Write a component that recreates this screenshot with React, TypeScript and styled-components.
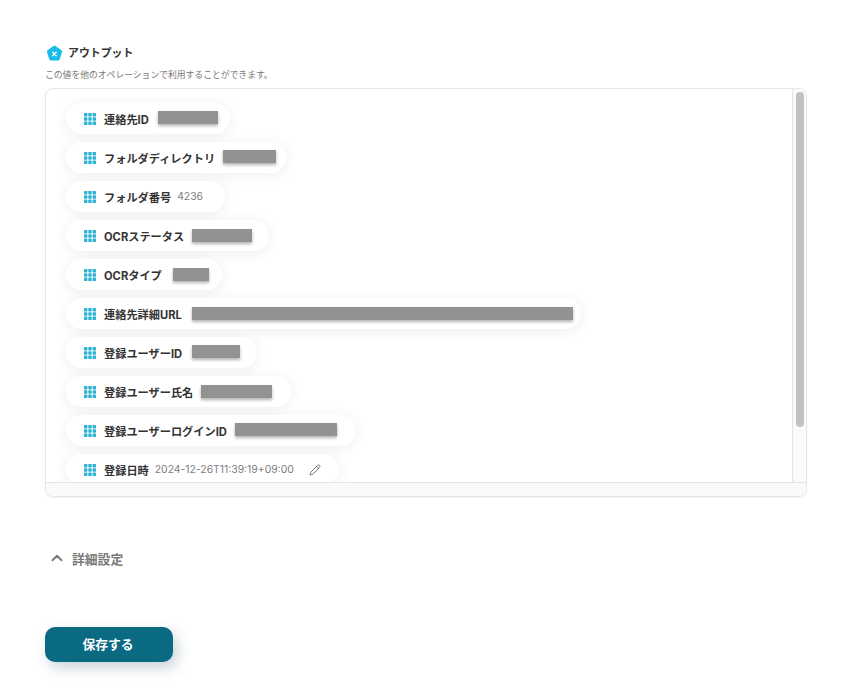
import React from 'react'
import styled, { createGlobalStyle } from 'styled-components'
import { ChevronUp, Pencil } from 'lucide-react'

const GlobalStyle = createGlobalStyle`
    html, body {
        margin: 0;
        background: #fff;
        font-family: Inter, 'Noto Sans CJK JP', sans-serif;
        color: #333;
    }
`

const Page = styled.div`
    display: flex;
    flex-direction: column;
    align-items: flex-start;
    width: 853px;
    height: 689px;
    box-sizing: border-box;
    padding: 43px 0 0 45px;
    overflow: hidden;
`

const TitleRow = styled.div`
    display: flex;
    align-items: center;
    gap: 5px;
    height: 18px;
    margin-left: 1px;
`

const Title = styled.span`
    font-size: 10.9px;
    font-weight: 700;
    color: #333;
`

const Hint = styled.p`
    margin: 7px 0 6px;
    font-size: 8.8px;
    line-height: 14px;
    color: #777;
`

const OutputBox = styled.div`
    display: grid;
    grid-template-columns: 1fr 14px;
    grid-template-rows: 1fr 14px;
    width: 762px;
    height: 409px;
    box-sizing: border-box;
    flex: none;
    border: 1px solid #e6e6e6;
    border-radius: 8px;
    box-shadow: 0 1px 2px rgba(0, 0, 0, 0.06);
    overflow: hidden;
`

const Viewport = styled.div`
    overflow: hidden;
`

const VerticalTrack = styled.div`
    box-sizing: border-box;
    padding: 3px 2px 0 3px;
    border-left: 1px solid #e4e4e4;
    background: #fafafa;
`

const Thumb = styled.div`
    width: 8px;
    height: 335px;
    border-radius: 4px;
    background: #c1c1c1;
`

const BottomTrack = styled.div`
    grid-column: 1 / 3;
    border-top: 1px solid #e4e4e4;
    background: #fafafa;
`

const PillList = styled.div`
    display: flex;
    flex-direction: column;
    align-items: flex-start;
    gap: 8px;
    padding: 14px 0 30px 20px;
`

const Pill = styled.div`
    display: flex;
    align-items: center;
    flex: none;
    height: 31px;
    padding-left: 18px;
    border-radius: 16px;
    background: #fff;
    box-shadow: 0 2px 14px rgba(0, 0, 0, 0.07);
`

const PillLabel = styled.span`
    margin-left: 8px;
    font-size: 11.2px;
    font-weight: 700;
    color: #333;
    white-space: nowrap;
`

const PillValue = styled.span<{ $trail?: number }>`
    margin-left: 6px;
    margin-right: ${p => p.$trail ?? 0}px;
    font-size: 10.4px;
    color: #7d7d7d;
    white-space: nowrap;
`

const Redacted = styled.span<{ $gap: number; $width: number; $trail: number; $lift: number }>`
    flex: none;
    width: ${p => p.$width}px;
    height: 13px;
    margin: ${p => p.$lift * -2}px ${p => p.$trail}px 0 ${p => p.$gap}px;
    background: #929292;
    box-shadow: 0 2px 3px rgba(0, 0, 0, 0.3);
    filter: blur(0.5px);
`

const EditButton = styled.span`
    display: flex;
    margin: 0 18px 0 15px;
    color: #555;
`

const DetailRow = styled.div`
    display: flex;
    align-items: center;
    gap: 6px;
    margin: 52px 0 0 3px;
    height: 18px;
    color: #777;
`

const DetailLabel = styled.span`
    font-size: 12.8px;
    font-weight: 700;
    color: #7a7a7a;
`

const SaveButton = styled.button`
    width: 128px;
    height: 35px;
    margin-top: 60px;
    padding: 0 2px 3px 0;
    border: none;
    border-radius: 10px;
    background: #0a6a82;
    box-shadow: 4px 6px 14px rgba(10, 60, 90, 0.22);
    color: #fff;
    font-family: inherit;
    font-size: 12.8px;
    font-weight: 700;
`

const PentagonIcon = () => (
    <svg width='17' height='17' viewBox='0 0 17 17' style={{ marginTop: 2 }}>
        <path
            d='M7.4 1.1a1.8 1.8 0 0 1 2.2 0l5.8 4.2a1.8 1.8 0 0 1 .6 2l-2.2 6.8a1.8 1.8 0 0 1-1.7 1.3H4.9a1.8 1.8 0 0 1-1.7-1.3L1 7.3a1.8 1.8 0 0 1 .6-2z'
            fill='#18bce8'
        />
        <path d='M6.8 7.2l3.4 3.6M10.2 7.2l-3.4 3.6' stroke='#fff' strokeWidth='1.4' strokeLinecap='round' />
    </svg>
)

const GridIcon = () => (
    <svg width='12' height='12' viewBox='0 0 12 12' fill='#2eb3d3'>
        {[0, 4.3, 8.6].flatMap(y =>
            [0, 4.3, 8.6].map(x => <rect key={`${x}-${y}`} x={x} y={y} width='3.4' height='3.4' rx='0.6' />)
        )}
    </svg>
)

const rows = [
    { label: '連絡先ID', gap: 9, width: 60, trail: 12, lift: 1.5 },
    { label: 'フォルダディレクトリ', gap: 8, width: 53, trail: 10, lift: 1 },
    { label: 'フォルダ番号', value: '4236', trail: 22, lift: 0 },
    { label: 'OCRステータス', gap: 8, width: 60, trail: 17, lift: 0 },
    { label: 'OCRタイプ', gap: 11, width: 36, trail: 13, lift: 0.5 },
    { label: '連絡先詳細URL', gap: 10, width: 381, trail: 8, lift: 0 },
    { label: '登録ユーザーID', gap: 10, width: 48, trail: 17, lift: 1 },
    { label: '登録ユーザー氏名', gap: 8, width: 71, trail: 19, lift: 0.5 },
    { label: '登録ユーザーログインID', gap: 8, width: 102, trail: 19, lift: 1 },
]

const App = () => {
    return (
        <Page>
            <GlobalStyle />
            <TitleRow>
                <PentagonIcon />
                <Title>アウトプット</Title>
            </TitleRow>
            <Hint>この値を他のオペレーションで利用することができます。</Hint>
            <OutputBox>
                <Viewport>
                    <PillList>
                        {rows.map(row => (
                            <Pill key={row.label}>
                                <GridIcon />
                                <PillLabel>{row.label}</PillLabel>
                                {row.value ? (
                                    <PillValue $trail={row.trail}>{row.value}</PillValue>
                                ) : (
                                    <Redacted $gap={row.gap!} $width={row.width!} $trail={row.trail} $lift={row.lift} />
                                )}
                            </Pill>
                        ))}
                        <Pill>
                            <GridIcon />
                            <PillLabel>登録日時</PillLabel>
                            <PillValue>2024-12-26T11:39:19+09:00</PillValue>
                            <EditButton>
                                <Pencil size={12} strokeWidth={1.6} />
                            </EditButton>
                        </Pill>
                    </PillList>
                </Viewport>
                <VerticalTrack>
                    <Thumb />
                </VerticalTrack>
                <BottomTrack />
            </OutputBox>
            <DetailRow>
                <ChevronUp size={18} strokeWidth={2.4} />
                <DetailLabel>詳細設定</DetailLabel>
            </DetailRow>
            <SaveButton>保存する</SaveButton>
        </Page>
    )
}

export default App
